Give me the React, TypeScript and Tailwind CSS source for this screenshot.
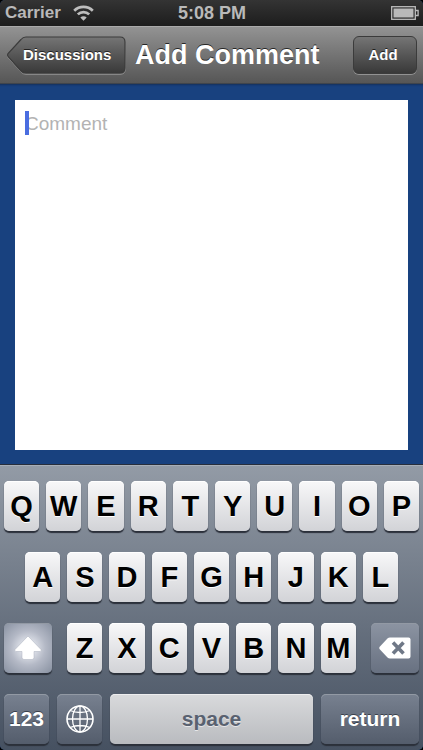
import type { ReactNode } from "react";

const rowOne = "QWERTYUIOP".split("");
const rowTwo = "ASDFGHJKL".split("");
const rowThree = "ZXCVBNM".split("");

function LetterKey({ letter }: { letter: string }) {
  return (
    <button
      type="button"
      className="h-[50px] min-w-0 flex-1 rounded-[5px] bg-linear-to-b from-[#f8f8f9] to-[#d2d3d7] text-center text-[29px] leading-[50px] font-bold text-black shadow-[0_2px_1px_#2b303a,inset_0_1px_0_#ffffff] [text-shadow:0_1px_0_#ffffff]"
    >
      {letter}
    </button>
  );
}

function DarkKey({ label, className, children }: { label: string; className: string; children: ReactNode }) {
  return (
    <button
      type="button"
      aria-label={label}
      className={
        "flex h-[50px] shrink-0 items-center justify-center rounded-[5px] text-[21px] font-bold text-white shadow-[0_2px_1px_#2b303a,inset_0_1px_0_#9299a4] [text-shadow:0_-1px_0_#3b414c] " +
        className
      }
    >
      {children}
    </button>
  );
}

function StatusBar() {
  return (
    <div className="grid h-[26px] grid-cols-3 items-center bg-linear-to-b from-[#343434] to-[#1d1d1d] pr-1 pl-[5px] font-bold text-[#b9b9b9]">
      <div className="flex items-center gap-3 text-[17px] leading-[26px]">
        <span>Carrier</span>
        <svg width="21" height="16" viewBox="0 0 21 16" fill="none" stroke="#bdbdbd" strokeWidth="2.7" aria-label="Wi-Fi">
          <path d="M1.2 5.7C6.4 .6 14.6 .6 19.8 5.7" />
          <path d="M4.8 9.4C8 6.3 13 6.3 16.2 9.4" />
          <path d="M10.5 15.8 7.3 12.6C9.1 10.9 11.9 10.9 13.7 12.6Z" fill="#bdbdbd" stroke="none" />
        </svg>
      </div>
      <div className="text-center text-[18px] leading-[26px] whitespace-nowrap">5:08 PM</div>
      <svg className="justify-self-end" width="28" height="14" viewBox="0 0 28 14" aria-label="Battery">
        <rect x=".7" y=".7" width="23.6" height="12.6" fill="none" stroke="#bdbdbd" strokeWidth="1.3" />
        <rect x="2.5" y="2.5" width="20" height="9" fill="#b9b9b9" />
        <path d="M24.5 4.5h2.6v5h-2.6" fill="none" stroke="#bdbdbd" strokeWidth="1.3" />
      </svg>
    </div>
  );
}

function NavBar() {
  return (
    <header className="flex h-[58px] items-center border-t border-b border-t-[#aaaaaa] border-b-[#3f444c] bg-linear-to-b from-[#939393] to-[#565656] px-[6px]">
      <button
        type="button"
        className="relative h-[39px] w-[120px] shrink-0 pl-[17px] text-left text-[15px] font-bold text-white [text-shadow:0_-1px_0_#222222]"
      >
        <svg className="absolute inset-0" width="120" height="39" viewBox="0 0 120 39" aria-hidden="true">
          <defs>
            <linearGradient id="back-fill" x1="0" y1="0" x2="0" y2="1">
              <stop offset="0" stopColor="#757575" />
              <stop offset=".5" stopColor="#565656" />
              <stop offset="1" stopColor="#393939" />
            </linearGradient>
          </defs>
          <path
            d="M20 1.7H114Q119.300 1.700 119.300 7V33Q119.300 38.300 114 38.300H20Q17 38.300 15 36L2 21.500Q.8 20 2 18.500L15 4Q17 1.700 20 1.700Z"
            fill="none"
            stroke="#929292"
            strokeWidth="1"
          />
          <path
            d="M20 1H114Q119 1 119 6V32Q119 37 114 37H20Q17 37 15 35L2 20.500Q1 19 2 17.500L15 3.500Q17 1 20 1Z"
            fill="url(#back-fill)"
            stroke="#3b3b3b"
            strokeWidth="1.200"
          />
        </svg>
        <span className="relative">Discussions</span>
      </button>
      <h1 className="min-w-0 flex-1 pl-[9px] text-[27px] leading-[36px] font-bold whitespace-nowrap text-white [text-shadow:0_-1px_0_#262626]">
        Add Comment
      </h1>
      <button
        type="button"
        className="h-[38px] w-16 shrink-0 rounded-[6px] border border-[#3b3b3b] bg-linear-to-b from-[#757575] to-[#393939] pr-1 text-[15px] font-bold text-white shadow-[0_1px_0_#929292] [text-shadow:0_-1px_0_#222222]"
      >
        Add
      </button>
    </header>
  );
}

function Keyboard() {
  return (
    <section
      aria-label="Keyboard"
      className="flex flex-col gap-[21px] border-t border-[#282f3c] bg-linear-to-b from-[#939ba6] to-[#465161] px-1 pt-4 pb-[6px] shadow-[inset_0_1px_0_#a8afb8]"
    >
      <div className="flex gap-[7px]">
        {rowOne.map((l) => (
          <LetterKey key={l} letter={l} />
        ))}
      </div>
      <div className="flex gap-[7px] px-[21px]">
        {rowTwo.map((l) => (
          <LetterKey key={l} letter={l} />
        ))}
      </div>
      <div className="flex gap-[15px]">
        <DarkKey label="Shift" className="w-12 bg-[radial-gradient(circle,#e4e7ee_15%,#b4b9c6_50%,#8790a0_100%)]">
          <svg width="28" height="26" viewBox="0 0 28 26" aria-hidden="true">
            <path
              d="M14 1 27 14.500Q28 16.500 26 16.500H20V22.500Q20 24.500 18 24.500H10Q8 24.500 8 22.500V16.500H2Q0 16.500 1 14.500Z"
              fill="#ffffff"
              stroke="#a9afbd"
              strokeWidth=".5"
            />
          </svg>
        </DarkKey>
        <div className="flex min-w-0 flex-1 gap-[7px]">
          {rowThree.map((l) => (
            <LetterKey key={l} letter={l} />
          ))}
        </div>
        <DarkKey label="Delete" className="w-12 bg-linear-to-b from-[#8c94a2] to-[#687181]">
          <svg width="32" height="22" viewBox="0 0 32 22" aria-hidden="true">
            <path d="M11 .5H29.500Q31.500 .5 31.500 2.500V19.500Q31.500 21.500 29.500 21.500H11Q9.500 21.500 8.500 20.500L.5 12Q0 11 .5 10L8.500 1.500Q9.500 .5 11 .5Z" fill="#ffffff" />
            <path d="M14 5.500 24.500 16.500M24.500 5.500 14 16.500" stroke="#6f7887" strokeWidth="3.600" />
          </svg>
        </DarkKey>
      </div>
      <div className="flex gap-2">
        <DarkKey label="Numbers" className="w-[45px] bg-linear-to-b from-[#788190] to-[#545d6c]">
          123
        </DarkKey>
        <DarkKey label="Next keyboard" className="w-[45px] bg-linear-to-b from-[#788190] to-[#545d6c]">
          <svg width="28" height="28" viewBox="0 0 28 28" fill="none" stroke="#ffffff" strokeWidth="1.300" aria-hidden="true">
            <circle cx="14" cy="14" r="13" strokeWidth="1.600" />
            <ellipse cx="14" cy="14" rx="7.500" ry="13" />
            <path d="M14 1V27M1 14H27M4 5.500Q14 9.500 24 5.500M4 22.500Q14 18.500 24 22.500" />
          </svg>
        </DarkKey>
        <button
          type="button"
          className="h-[50px] min-w-0 flex-1 rounded-[5px] bg-linear-to-b from-[#d9dadc] to-[#b9bbbf] text-[21px] font-bold text-[#596170] shadow-[0_2px_1px_#2b303a,inset_0_1px_0_#ededee] [text-shadow:0_1px_0_#e6e7e9]"
        >
          space
        </button>
        <DarkKey label="Return" className="w-[98px] bg-linear-to-b from-[#788190] to-[#545d6c]">
          return
        </DarkKey>
      </div>
    </section>
  );
}

export default function App() {
  return (
    <div className="min-h-screen bg-black font-['Liberation_Sans',Arial,sans-serif]">
      <div className="flex min-h-screen flex-col overflow-hidden rounded-[5px] bg-[#18417f]">
        <StatusBar />
        <NavBar />
        <main className="flex flex-1 flex-col px-[15px] pt-4 pb-[14px] shadow-[inset_0_3px_2px_-2px_#15305c]">
          <div className="relative flex flex-1 flex-col">
            <textarea
              aria-label="Comment"
              placeholder="Comment"
              className="w-full flex-1 resize-none rounded-none bg-white px-[10px] py-[13px] text-[19px] leading-[22px] text-black outline-none placeholder:text-[#b3b3b3]"
            />
            <span className="absolute top-[11px] left-[10px] h-6 w-1 bg-[#4a6de0]" aria-hidden="true" />
          </div>
        </main>
        <Keyboard />
      </div>
    </div>
  );
}
